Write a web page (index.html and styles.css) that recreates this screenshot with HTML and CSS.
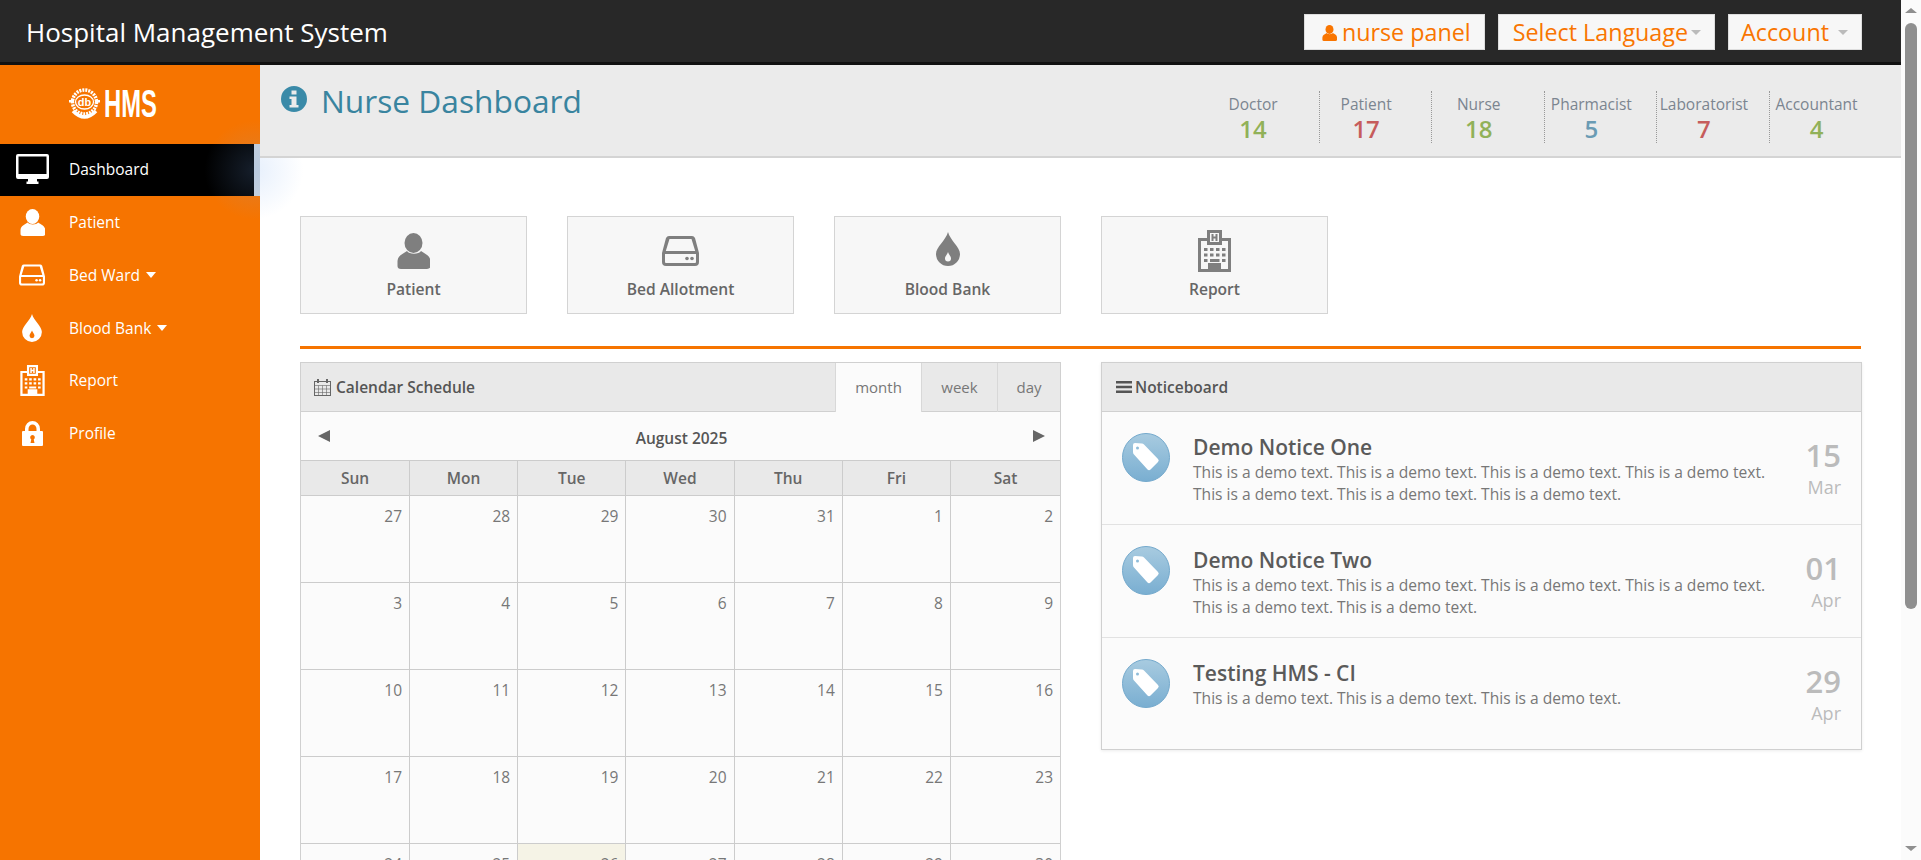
FILE: index.html
```html
<!DOCTYPE html>
<html lang="en">
<head>
  <meta charset="UTF-8">
  <title>Hospital Management System</title>
  <link rel="stylesheet" href="styles.css">
</head>
<body>

  <svg class="defs" width="0" height="0">
    <symbol id="i-person" viewBox="0 0 33 36">
      <ellipse cx="16.5" cy="10" rx="9" ry="10"/>
      <path d="M10 18C6 21 1 22 .5 28v5q0 3 3.500 3h26q3.500 0 3.500-3v-5c-.5-6-5.500-7-9.500-10-2 3.500-12 3.500-14 0z"/>
    </symbol>
    <symbol id="i-bed" viewBox="0 0 37 30">
      <path fill-rule="evenodd" d="M7 0h23q2 0 3 2l4 15v9q0 4-4 4H4q-4 0-4-4v-9L4 2q1-2 3-2zm.5 3L3.800 15h29.400L29.500 3zM3 18v8q0 1 1 1h29q1 0 1-1v-8z"/>
      <circle cx="25" cy="22.500" r="1.800"/>
      <circle cx="30" cy="22.500" r="1.800"/>
    </symbol>
    <symbol id="i-drop" viewBox="0 0 24 34">
      <path fill-rule="evenodd" d="M12 0c2 8 12 15 12 22a12 12 0 0 1-24 0C0 15 10 8 12 0zm0 20c-1 3-3 4-3 6.500a3 3 0 0 0 6 0c0-2.500-2-3.500-3-6.500z"/>
    </symbol>
    <symbol id="i-hospital" viewBox="0 0 33 42">
      <path fill-rule="evenodd" d="M9 0h15v8h9v34H0V8h9zm3 3v9h9V3zM3 11v28h7v-6h13v6h7V11h-6v4H9v-4z"/>
      <path d="M13.500 4h2v2.500h2V4h2v7h-2V8.500h-2V11h-2z"/>
      <path d="M6 18h3.500v3H6zm6 0h3.500v3H12zm6 0h3.500v3H18zm6 0h3.500v3H24zM6 23.500h3.500v3H6zm6 0h3.500v3H12zm6 0h3.500v3H18zm6 0h3.500v3H24zM6 29h3.500v3H6zm18 0h3.500v3H24zM12 29h9.500v3H12z"/>
    </symbol>
    <symbol id="i-lock" viewBox="0 0 21 25">
      <path fill-rule="evenodd" d="M3 10V8a7.500 8 0 0 1 15 0v2h2q1 0 1 1v13q0 1-1 1H1q-1 0-1-1V11q0-1 1-1zm3.500 0h8V8a4 4.500 0 0 0-8 0zm4 4a2.500 2.500 0 0 0-1.200 4.600L8.500 22h4l-.8-3.400A2.500 2.500 0 0 0 10.500 14z"/>
    </symbol>
    <symbol id="i-monitor" viewBox="0 0 33 30">
      <path fill-rule="evenodd" d="M2 0h29q2 0 2 2v21q0 2-2 2H21v2.500h1.500V30h-12v-2.500H12V25H2q-2 0-2-2V2q0-2 2-2zm.5 2.500v17.500h28V2.500z"/>
    </symbol>
    <symbol id="i-tag" viewBox="0 0 48 49">
      <defs>
        <linearGradient id="tagfill" x1="0" y1="0" x2="0" y2="1">
          <stop offset="0" stop-color="#a8cbe0"/>
          <stop offset="1" stop-color="#79aed1"/>
        </linearGradient>
      </defs>
      <ellipse cx="24" cy="24.500" rx="23.500" ry="24" fill="url(#tagfill)" stroke="#74a9cc"/>
      <path fill="#fff" d="M11 12q0-2 2-2l7 .5q1 0 2 1L36 26q1.500 1.500 0 3l-7.500 7.500q-1.500 1.500-3 0L12 21.500q-1-1-1-2.500z"/>
      <circle cx="15.500" cy="15" r="1.500" fill="#8fbcd9"/>
    </symbol>
    <symbol id="i-info" viewBox="0 0 26 26">
      <path fill-rule="evenodd" d="M13 0a13 13 0 1 1 0 26 13 13 0 0 1 0-26zm-2.500 4.500v4h5v-4zM8.500 10.500v2.500h2v6h-2v2.500h9V19h-2v-8.500z"/>
    </symbol>
  </svg>

  <div class="window">
    <div class="app">

      <header class="topbar">
        <a class="brand">Hospital Management System</a>
        <div class="top-actions">
          <a class="top-btn"><svg class="top-user"><use href="#i-person"/></svg>nurse panel</a>
          <a class="top-btn">Select Language<span class="caret caret-tight"></span></a>
          <a class="top-btn">Account<span class="caret"></span></a>
        </div>
      </header>

      <div class="layout">
        <aside class="sidebar">
          <div class="logo">
            <svg class="seal" viewBox="0 0 31 32">
              <circle cx="15.500" cy="14" r="12" fill="none" stroke="#fff" stroke-width="3.500" stroke-dasharray="2 1"/>
              <ellipse cx="15.500" cy="14" rx="9" ry="7" fill="none" stroke="#fff" stroke-width="1.300"/>
              <path fill="none" stroke="#fff" stroke-width="3.500" d="M4 23q11.500 12 23 0"/>
              <path fill="#fff" d="M0 12h5v2.500H0zm26 0h5v2.500h-5z"/>
              <text class="seal-text" x="15.500" y="17.500" text-anchor="middle">db</text>
            </svg>
            <span class="logo-text">HMS</span>
          </div>
          <nav class="side-nav">
            <a class="side-link active"><span class="side-icon"><svg class="ic-monitor"><use href="#i-monitor"/></svg></span>Dashboard</a>
            <a class="side-link"><span class="side-icon"><svg class="ic-person"><use href="#i-person"/></svg></span>Patient</a>
            <a class="side-link"><span class="side-icon"><svg class="ic-bed"><use href="#i-bed"/></svg></span>Bed Ward<span class="caret caret-white"></span></a>
            <a class="side-link"><span class="side-icon"><svg class="ic-drop"><use href="#i-drop"/></svg></span>Blood Bank<span class="caret caret-white"></span></a>
            <a class="side-link"><span class="side-icon"><svg class="ic-hospital"><use href="#i-hospital"/></svg></span>Report</a>
            <a class="side-link"><span class="side-icon"><svg class="ic-lock"><use href="#i-lock"/></svg></span>Profile</a>
          </nav>
        </aside>

        <main class="main">
          <div class="glow"></div>

          <div class="page-head">
            <h1 class="page-title"><svg class="title-icon"><use href="#i-info"/></svg>Nurse Dashboard</h1>
            <ul class="stats">
              <li class="stat"><span class="stat-label">Doctor</span><span class="stat-num green">14</span></li>
              <li class="stat"><span class="stat-label">Patient</span><span class="stat-num red">17</span></li>
              <li class="stat"><span class="stat-label">Nurse</span><span class="stat-num green">18</span></li>
              <li class="stat"><span class="stat-label">Pharmacist</span><span class="stat-num blue">5</span></li>
              <li class="stat"><span class="stat-label">Laboratorist</span><span class="stat-num red">7</span></li>
              <li class="stat"><span class="stat-label">Accountant</span><span class="stat-num green">4</span></li>
            </ul>
          </div>

          <div class="content">
            <div class="shortcuts">
              <a class="shortcut"><svg class="sc-person"><use href="#i-person"/></svg><span>Patient</span></a>
              <a class="shortcut"><svg class="sc-bed"><use href="#i-bed"/></svg><span>Bed Allotment</span></a>
              <a class="shortcut"><svg class="sc-drop"><use href="#i-drop"/></svg><span>Blood Bank</span></a>
              <a class="shortcut"><svg class="sc-hospital"><use href="#i-hospital"/></svg><span>Report</span></a>
            </div>

            <hr class="rule">

            <div class="columns">
              <section class="panel">
                <div class="panel-head">
                  <h2 class="panel-title">
                    <svg class="cal-icon" viewBox="0 0 17 17">
                      <rect x=".5" y="2.500" width="16" height="14"/>
                      <path class="cal-grid" d="M.5 6.500h16M.5 10h16M.5 13.500h16M4.500 6.500v10M8.500 6.500v10M12.500 6.500v10"/>
                      <path stroke-width="2" d="M4 0v4M13 0v4"/>
                    </svg>
                    Calendar Schedule
                  </h2>
                  <div class="tabs">
                    <a class="tab active">month</a>
                    <a class="tab">week</a>
                    <a class="tab">day</a>
                  </div>
                </div>
                <div class="cal-nav">
                  <span class="arrow arrow-left"></span>
                  <span class="cal-month">August 2025</span>
                  <span class="arrow arrow-right"></span>
                </div>
                <table class="cal">
                  <thead>
                    <tr><th>Sun</th><th>Mon</th><th>Tue</th><th>Wed</th><th>Thu</th><th>Fri</th><th>Sat</th></tr>
                  </thead>
                  <tbody>
                    <tr><td>27</td><td>28</td><td>29</td><td>30</td><td>31</td><td>1</td><td>2</td></tr>
                    <tr><td>3</td><td>4</td><td>5</td><td>6</td><td>7</td><td>8</td><td>9</td></tr>
                    <tr><td>10</td><td>11</td><td>12</td><td>13</td><td>14</td><td>15</td><td>16</td></tr>
                    <tr><td>17</td><td>18</td><td>19</td><td>20</td><td>21</td><td>22</td><td>23</td></tr>
                    <tr><td>24</td><td>25</td><td class="today">26</td><td>27</td><td>28</td><td>29</td><td>30</td></tr>
                  </tbody>
                </table>
              </section>

              <section class="panel panel-notice">
                <div class="panel-head">
                  <h2 class="panel-title">
                    <svg class="bars-icon" viewBox="0 0 16 12"><path d="M0 0h16v2.500H0zm0 4.700h16v2.500H0zm0 4.800h16V12H0z"/></svg>
                    Noticeboard
                  </h2>
                </div>
                <article class="notice">
                  <svg class="notice-icon"><use href="#i-tag"/></svg>
                  <div class="notice-body">
                    <h3>Demo Notice One</h3>
                    <p>This is a demo text. This is a demo text. This is a demo text. This is a demo text. This is a demo text. This is a demo text. This is a demo text.</p>
                  </div>
                  <div class="notice-date"><b>15</b><span>Mar</span></div>
                </article>
                <article class="notice">
                  <svg class="notice-icon"><use href="#i-tag"/></svg>
                  <div class="notice-body">
                    <h3>Demo Notice Two</h3>
                    <p>This is a demo text. This is a demo text. This is a demo text. This is a demo text. This is a demo text. This is a demo text.</p>
                  </div>
                  <div class="notice-date"><b>01</b><span>Apr</span></div>
                </article>
                <article class="notice">
                  <svg class="notice-icon"><use href="#i-tag"/></svg>
                  <div class="notice-body">
                    <h3>Testing HMS - CI</h3>
                    <p>This is a demo text. This is a demo text. This is a demo text.</p>
                  </div>
                  <div class="notice-date"><b>29</b><span>Apr</span></div>
                </article>
              </section>
            </div>
          </div>
        </main>
      </div>
    </div>

    <div class="scrollbar">
      <span class="sb-arrow sb-up"></span>
      <span class="sb-thumb"></span>
      <span class="sb-arrow sb-down"></span>
    </div>
  </div>

</body>
</html>
```

FILE: styles.css
```css
* {
  box-sizing: border-box;
}
html, body {
  margin: 0;
  height: 100%;
  overflow: hidden;
}
body {
  font-family: "Open Sans", sans-serif;
  font-size: 15.5px;
  color: #666;
  background-color: #fff;
}
svg {
  fill: currentColor;
}
.defs {
  position: absolute;
}
h1, h2, h3, p, ul {
  margin: 0;
  padding: 0;
}

.window {
  display: flex;
  height: 100vh;
}
.app {
  flex: 1;
  min-width: 0;
  display: flex;
  flex-direction: column;
}

/* scrollbar */
.scrollbar {
  width: 20px;
  background: #fbfbfb;
  display: flex;
  flex-direction: column;
  align-items: center;
  padding: 8px 0 9px;
}
.sb-thumb {
  width: 12px;
  height: 586px;
  margin-top: 10px;
  background: #8f8f8f;
  border-radius: 6px;
}
.sb-arrow {
  width: 0;
  height: 0;
  border-left: 6px solid transparent;
  border-right: 6px solid transparent;
}
.sb-up {
  border-bottom: 5px solid #8f8f8f;
}
.sb-down {
  margin-top: auto;
  border-top: 5px solid #8f8f8f;
}

/* top bar */
.topbar {
  height: 65px;
  flex: none;
  display: flex;
  align-items: flex-start;
  justify-content: space-between;
  background: #282828;
  border-bottom: 3px solid #111;
  padding: 14px 39px 0 26px;
}
.brand {
  color: #fff;
  font-size: 26px;
  line-height: 36px;
}
.top-actions {
  display: flex;
  gap: 13px;
}
.top-btn {
  height: 36px;
  display: flex;
  align-items: center;
  padding: 0 13px 0 14px;
  font-size: 23.3px;
  color: #f97500;
  background: #f7f7f7;
  border: 1px solid #ddd;
}
.top-btn:last-child {
  padding-left: 12px;
}
.top-user {
  width: 15px;
  height: 16px;
  margin: 2px 5px 0 3px;
}
.caret {
  display: inline-block;
  width: 0;
  height: 0;
  margin-left: 9px;
  border-left: 5px solid transparent;
  border-right: 5px solid transparent;
  border-top: 5px solid #bbb;
}
.caret-tight {
  margin-left: 3px;
}
.caret-white {
  margin-left: 6px;
  border-left-width: 5.5px;
  border-right-width: 5.5px;
  border-top: 6px solid #fff;
}

.layout {
  flex: 1;
  min-height: 0;
  display: flex;
}

/* sidebar */
.sidebar {
  width: 260px;
  flex: none;
  background: #f67400;
}
.logo {
  height: 79px;
  display: flex;
  align-items: flex-start;
  padding: 23px 0 0 69px;
  gap: 4px;
  color: #fff;
}
.seal {
  width: 31px;
  height: 32px;
}
.seal-text {
  font: bold 11px "Liberation Sans", sans-serif;
  fill: #fff;
}
.logo-text {
  width: 53px;
  font: bold 39px/32px "Liberation Sans", sans-serif;
  transform: scaleX(.61);
  transform-origin: left center;
  white-space: nowrap;
}
.side-link {
  height: 52.7px;
  display: flex;
  align-items: center;
  color: #fff;
  font-size: 15.5px;
}
.side-link.active {
  height: 52px;
  padding-bottom: 2px;
  background: #000;
  border-right: 6px solid #c9d2dc;
  background-clip: padding-box;
}
.side-icon {
  width: 69px;
  padding-right: 5px;
  flex: none;
  display: flex;
  justify-content: center;
}
.ic-monitor { width: 33px; height: 30px; }
.ic-person { width: 25px; height: 27px; }
.ic-bed { width: 26px; height: 22px; }
.ic-drop { width: 20px; height: 28px; }
.ic-hospital { width: 25px; height: 31px; }
.ic-lock { width: 21px; height: 25px; }

/* main */
.main {
  flex: 1;
  min-width: 0;
  position: relative;
}
.glow {
  position: absolute;
  left: -56px;
  top: 55px;
  width: 100px;
  height: 100px;
  background: radial-gradient(circle, rgba(120, 170, 240, .18), rgba(120, 170, 240, 0) 70%);
  pointer-events: none;
}
.page-head {
  position: relative;
  height: 93px;
  display: flex;
  justify-content: space-between;
  background: #ebebeb;
  border-bottom: 2px solid #d4d4d4;
  padding: 0 38px 0 21px;
}
.page-title {
  display: flex;
  align-items: flex-start;
  gap: 14px;
  padding-top: 15px;
  font-size: 31.7px;
  font-weight: 400;
  line-height: 42px;
  color: #39849f;
}
.title-icon {
  width: 26px;
  height: 26px;
  margin-top: 6px;
  color: #3a8aa8;
}
.stats {
  display: flex;
  list-style: none;
  padding-top: 26px;
  gap: 18.6px;
}
.stat {
  width: 94px;
  height: 52px;
  padding-top: 1px;
  display: flex;
  flex-direction: column;
  align-items: center;
  border-left: 1px dotted #999;
}
.stat:first-child {
  border-left: none;
}
.stat-label {
  font-size: 15.5px;
  line-height: 24px;
  color: #7b8590;
  white-space: nowrap;
}
.stat-num {
  font-size: 24px;
  line-height: 26px;
  font-weight: 600;
}
.green { color: #91b158; }
.red { color: #c65c5c; }
.blue { color: #6a9bb4; }

.content {
  padding: 58px 40px 0;
}
.shortcuts {
  display: flex;
  gap: 40px;
}
.shortcut {
  width: 227px;
  height: 98px;
  position: relative;
  display: flex;
  justify-content: center;
  background: #f7f7f7;
  border: 1px solid #d4d4d4;
  color: #7f7f7f;
}
.shortcut span {
  position: absolute;
  left: 0;
  right: 0;
  top: 60px;
  text-align: center;
  font-size: 15.6px;
  line-height: 24px;
  font-weight: 600;
  color: #666;
}
.sc-person { width: 33px; height: 36px; margin-top: 16px; }
.sc-bed { width: 37px; height: 30px; margin-top: 19px; }
.sc-drop { width: 24px; height: 34px; margin-top: 15px; }
.sc-hospital { width: 33px; height: 42px; margin-top: 13px; }

.rule {
  height: 3px;
  margin: 32px 0 13px;
  border: none;
  background: #f67400;
}
.columns {
  display: grid;
  grid-template-columns: 761px 761px;
  gap: 40px;
  align-items: start;
}
.panel {
  background: #fbfbfb;
  border: 1px solid #d0d0d0;
}
.panel-notice {
  box-shadow: 0 1px 3px rgba(0, 0, 0, .08);
}
.panel-head {
  height: 49px;
  display: flex;
  justify-content: space-between;
  background: #e9e9e9;
  border-bottom: 1px solid #d0d0d0;
}
.panel-title {
  display: flex;
  align-items: center;
  gap: 5px;
  padding-left: 13px;
  font-size: 15.5px;
  font-weight: 600;
  color: #555;
}
.cal-icon {
  width: 17px;
  height: 17px;
  color: #666;
  fill: none;
  stroke: currentColor;
}
.cal-grid {
  stroke-width: .6;
}
.bars-icon {
  width: 16px;
  height: 12px;
  margin: 0 -2px 0 1px;
  color: #555;
}
.tabs {
  display: flex;
}
.tab {
  display: flex;
  align-items: center;
  justify-content: center;
  width: 76px;
  margin-bottom: -1px;
  padding-bottom: 2px;
  font-size: 15px;
  color: #777;
  border-left: 1px solid #d8d8d8;
}
.tab.active {
  width: 86px;
  background: #fbfbfb;
}
.tab:last-child {
  width: 63px;
}
.cal-nav {
  height: 48px;
  display: flex;
  align-items: center;
  justify-content: space-between;
  padding: 3px 15px 0 17px;
}
.cal-month {
  font-size: 15.5px;
  font-weight: 600;
  color: #555;
}
.arrow {
  width: 0;
  height: 0;
  margin-top: -4px;
  border-top: 6px solid transparent;
  border-bottom: 6px solid transparent;
}
.arrow-left {
  border-right: 12px solid #666;
}
.arrow-right {
  border-left: 12px solid #666;
}

/* calendar */
.cal {
  width: 100%;
  table-layout: fixed;
  border-collapse: collapse;
}
.cal th, .cal td {
  border: 1px solid #ccc;
}
.cal th:first-child, .cal td:first-child {
  border-left: none;
}
.cal th:last-child, .cal td:last-child {
  border-right: none;
}
.cal th {
  width: 108.2px;
  height: 35px;
  background: #e9e9e9;
  font-size: 15.5px;
  font-weight: 600;
  color: #666;
}
.cal th:first-child {
  width: 108.5px;
}
.cal th:last-child {
  width: auto;
}
.cal td {
  height: 87px;
  padding: 9px 7px 0 0;
  vertical-align: top;
  text-align: right;
  font-size: 15.5px;
  line-height: 22px;
  color: #777;
}
.cal .today {
  background: #f5f3e6;
}

/* notices */
.notice {
  height: 113px;
  display: flex;
  padding: 21px 20px 0;
  border-bottom: 1px solid #e2e2e2;
}
.notice:last-child {
  height: 111px;
  border-bottom: none;
}
.notice-icon {
  width: 48px;
  height: 49px;
  flex: none;
  margin-right: 23px;
}
.notice-body {
  flex: 1;
  min-width: 0;
  padding-top: 1px;
}
.notice-body h3 {
  font-size: 21px;
  line-height: 27px;
  font-weight: 600;
  color: #5a5a5a;
}
.notice-body p {
  width: 590px;
  font-size: 15.6px;
  line-height: 22px;
  color: #777;
}
.notice-date {
  width: 60px;
  flex: none;
  display: flex;
  flex-direction: column;
  align-items: flex-end;
  text-align: right;
  padding-top: 4px;
}
.notice-date b {
  font-size: 31px;
  line-height: 36px;
  font-weight: 600;
  color: #bbb;
}
.notice-date span {
  font-size: 18px;
  line-height: 28px;
  color: #bbb;
}
```
